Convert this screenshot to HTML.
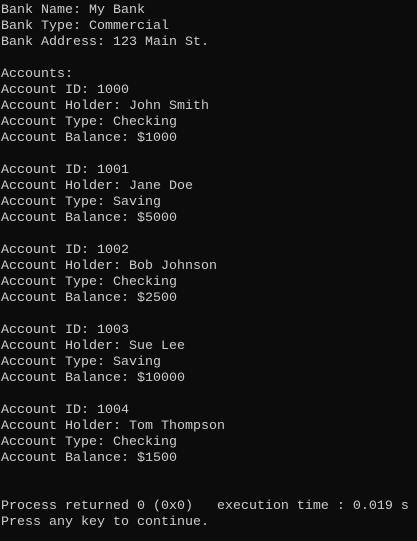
<!DOCTYPE html>
<html><head><style>
html,body{margin:0;padding:0;background:#0c0c0c;width:417px;height:541px;overflow:hidden}
pre{margin:0;padding:3px 0 0 1px;color:#cccccc;font-family:"Liberation Mono",monospace;font-size:13.33px;line-height:16px}
</style></head><body><pre>Bank Name: My Bank
Bank Type: Commercial
Bank Address: 123 Main St.

Accounts:
Account ID: 1000
Account Holder: John Smith
Account Type: Checking
Account Balance: $1000

Account ID: 1001
Account Holder: Jane Doe
Account Type: Saving
Account Balance: $5000

Account ID: 1002
Account Holder: Bob Johnson
Account Type: Checking
Account Balance: $2500

Account ID: 1003
Account Holder: Sue Lee
Account Type: Saving
Account Balance: $10000

Account ID: 1004
Account Holder: Tom Thompson
Account Type: Checking
Account Balance: $1500


Process returned 0 (0x0)   execution time : 0.019 s
Press any key to continue.</pre></body></html>
